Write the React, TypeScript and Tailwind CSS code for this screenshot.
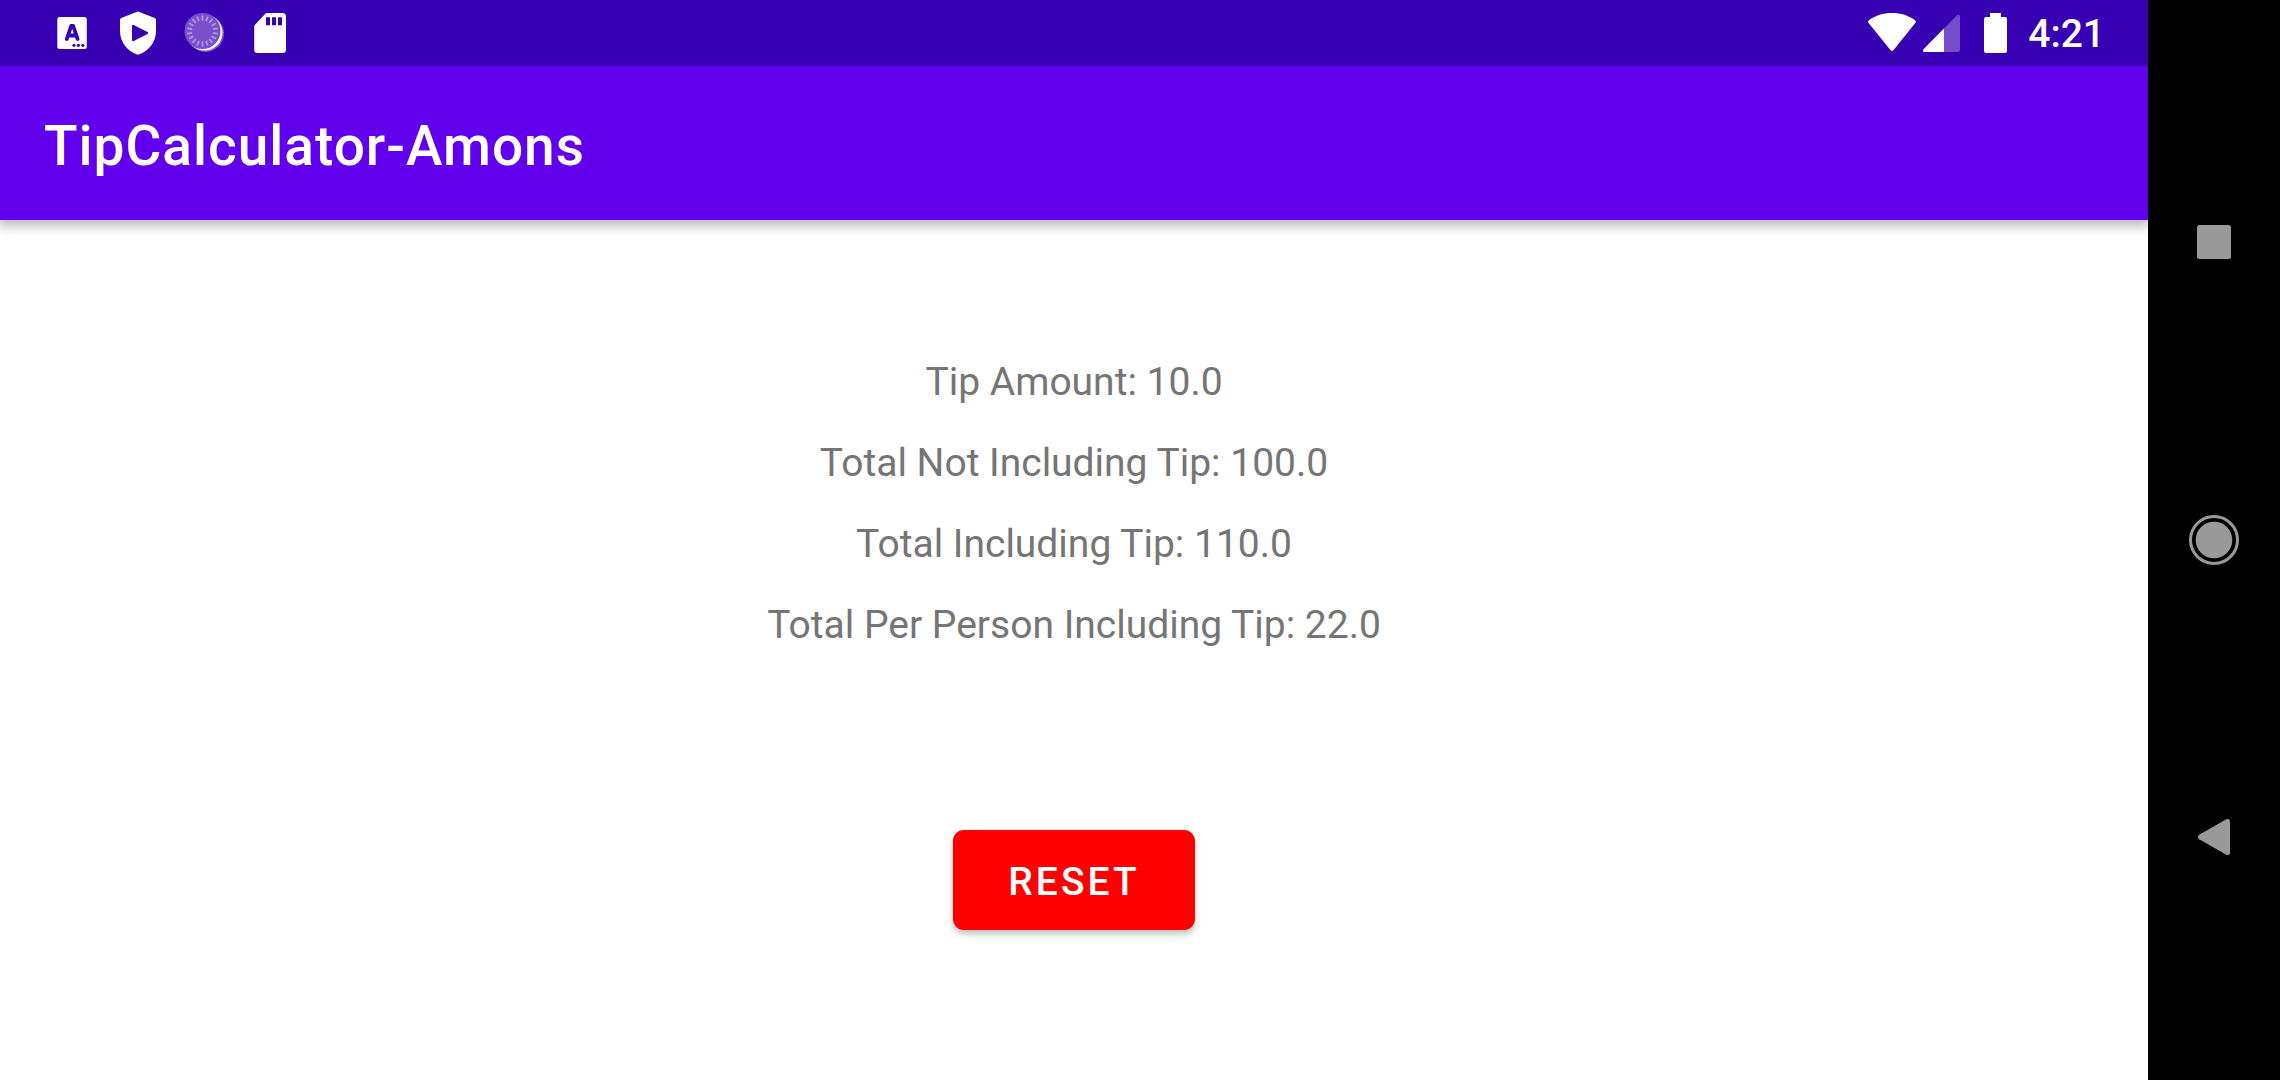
import React, { useState } from "react";

const LABELS = [
  { label: "Tip Amount", value: "10.0" },
  { label: "Total Not Including Tip", value: "100.0" },
  { label: "Total Including Tip", value: "110.0" },
  { label: "Total Per Person Including Tip", value: "22.0" },
];

const SEAL_TICKS = Array.from({ length: 18 }, (_, i) => i * 20);

function KeyboardIcon() {
  return (
    <svg viewBox="0 0 66 66" className="size-[66px]" aria-hidden="true">
      <rect x="18.3" y="17" width="29.5" height="32" rx="2.5" fill="#fff" />
      <path d="M27.8 39 L32.2 26 H34.2 L38.6 39 M29.8 35.5 H36.8" fill="none" stroke="#3700b3" strokeWidth="3.8" strokeLinecap="round" strokeLinejoin="round" />
      <g fill="#3700b3">
        <circle cx="35" cy="45.3" r="1.6" />
        <circle cx="39.4" cy="45.3" r="1.6" />
        <circle cx="43.8" cy="45.3" r="1.6" />
      </g>
    </svg>
  );
}

function ShieldPlayIcon() {
  return (
    <svg viewBox="0 0 66 66" className="size-[66px]" aria-hidden="true">
      <path
        d="M32.2 11.8 Q33 11.4 33.8 11.8 L49.8 18 Q51 18.6 51 20 V31 C51 42 43.5 51.5 34 54.4 Q33 54.8 32 54.4 C22.5 51.5 15 42 15 31 V20 Q15 18.6 16.2 18 Z"
        fill="#fff"
      />
      <path d="M28.2 26 V40 L42 33 Z" fill="#3700b3" stroke="#3700b3" strokeWidth="2.4" strokeLinejoin="round" />
    </svg>
  );
}

function SealIcon() {
  return (
    <svg viewBox="0 0 66 66" className="size-[66px]" aria-hidden="true">
      <circle cx="34.5" cy="33.5" r="18.5" fill="#fff" opacity="0.35" />
      <circle cx="33.5" cy="32.5" r="18" fill="#fff" />
      <circle cx="31.5" cy="31" r="18" fill="#7a4fcc" />
      <g stroke="#b198e2" strokeWidth="1.8">
        {SEAL_TICKS.map((a) => (
          <path key={a} d="M31.5 15.5 V20.5" transform={`rotate(${a} 31.5 31)`} />
        ))}
      </g>
    </svg>
  );
}

function SdCardIcon() {
  return (
    <svg viewBox="0 0 66 66" className="size-[66px]" aria-hidden="true">
      <path d="M29.5 13 H45.5 Q49 13 49 16.5 V49.5 Q49 53 45.5 53 H20.7 Q17.2 53 17.2 49.5 V26.5 Q17.2 25.5 18 24.7 L28 14 Q28.7 13 29.5 13 Z" fill="#fff" />
      <path d="M29 17.3 H33 V25.3 H29 Z M35 17.3 H39 V25.3 H35 Z M41 17.3 H45 V25.3 H41 Z" fill="#3700b3" />
    </svg>
  );
}

function WifiIcon() {
  return (
    <svg viewBox="0 0 48 66" className="h-[66px] w-12" aria-hidden="true">
      <path d="M0.4 22.7 C-0.2 21.9 0 21 0.9 20.3 C7 15.5 15 13 24 13 C33 13 41 15.5 47 20.3 C47.9 21 48.2 21.9 47.5 22.7 L25.6 50 Q24 51.9 22.4 50 Z" fill="#fff" />
    </svg>
  );
}

function SignalIcon() {
  return (
    <svg viewBox="0 0 37 66" className="h-[66px] w-[37px]" aria-hidden="true">
      <path d="M0.5 49.2 L33.8 15.6 C35.2 14.2 37 14.8 37 16.8 V49.5 Q37 52 34.5 52 H1.5 C-0.2 52 -0.6 50.3 0.5 49.2 Z" fill="#fff" opacity="0.3" />
      <path d="M0.5 49.2 L21 28.5 V52 H1.5 C-0.2 52 -0.6 50.3 0.5 49.2 Z" fill="#fff" />
    </svg>
  );
}

function BatteryIcon() {
  return (
    <svg viewBox="0 0 23 66" className="h-[66px] w-[23px]" aria-hidden="true">
      <path d="M6 13 H17 V17 H21 Q23 17 23 19 V51 Q23 53 21 53 H2 Q0 53 0 51 V19 Q0 17 2 17 H6 Z" fill="#fff" />
    </svg>
  );
}

function StatusBar() {
  return (
    <div className="relative z-10 flex items-center justify-between bg-[#3700b3] pr-[43px] pl-[39px] text-white">
      <div className="flex">
        <KeyboardIcon />
        <ShieldPlayIcon />
        <SealIcon />
        <SdCardIcon />
      </div>
      <div className="flex items-center">
        <WifiIcon />
        <div className="ml-[7px] flex">
          <SignalIcon />
        </div>
        <div className="mr-[21px] ml-6 flex">
          <BatteryIcon />
        </div>
        <time className="pt-0.5 text-[39px] leading-16 font-medium">4:21</time>
      </div>
    </div>
  );
}

function NavigationBar() {
  const button = "flex h-25 w-full items-center justify-center";
  return (
    <nav aria-label="System navigation" className="flex w-[132px] shrink-0 flex-col justify-between bg-black py-48">
      <button type="button" aria-label="Recent apps" className={button}>
        <svg viewBox="0 0 50 50" className="size-[50px]" aria-hidden="true">
          <rect x="8" y="8" width="34" height="34" rx="2.5" fill="#999" />
        </svg>
      </button>
      <button type="button" aria-label="Home" className={button}>
        <svg viewBox="0 0 50 50" className="size-[50px]" aria-hidden="true">
          <circle cx="25" cy="25" r="23.5" fill="none" stroke="#999" strokeWidth="3" />
          <circle cx="25" cy="25" r="18.3" fill="#999" />
        </svg>
      </button>
      <button type="button" aria-label="Back" className={button}>
        <svg viewBox="0 0 50 50" className="size-[50px]" aria-hidden="true">
          <path d="M11.5 24 L38.5 8.5 V39.5 Z" fill="#999" stroke="#999" strokeWidth="5" strokeLinejoin="round" />
        </svg>
      </button>
    </nav>
  );
}

export default function App() {
  const [cleared, setCleared] = useState(false);
  return (
    <div className="flex min-h-screen bg-white font-['Roboto',sans-serif]">
      <div className="flex min-w-0 flex-1 flex-col overflow-hidden">
        <StatusBar />
        <header className="relative flex h-[154px] items-center bg-[#6200ee] px-11 pt-1.5 shadow-[0_4px_11px_2px_rgba(0,0,0,0.28)]">
          <h1 className="text-[55px] leading-[66px] font-medium tracking-[1px] text-white">TipCalculator-Amons</h1>
        </header>
        <main className="flex flex-1 flex-col items-center pt-35 pb-16">
          <div className="flex flex-col items-center gap-9 text-[39px] leading-[45px] text-[#757575]">
            {LABELS.map(({ label, value }) => (
              <p key={label}>
                {label}: {cleared ? "0.0" : value}
              </p>
            ))}
          </div>
          <button
            type="button"
            onClick={() => setCleared(true)}
            className="mt-[182px] rounded-[11px] bg-[#ff0000] px-[55px] pt-1 text-[39px] leading-24 font-medium tracking-[3px] text-white shadow-[0_4px_6px_rgba(0,0,0,0.25)]"
          >
            RESET
          </button>
        </main>
      </div>
      <NavigationBar />
    </div>
  );
}
